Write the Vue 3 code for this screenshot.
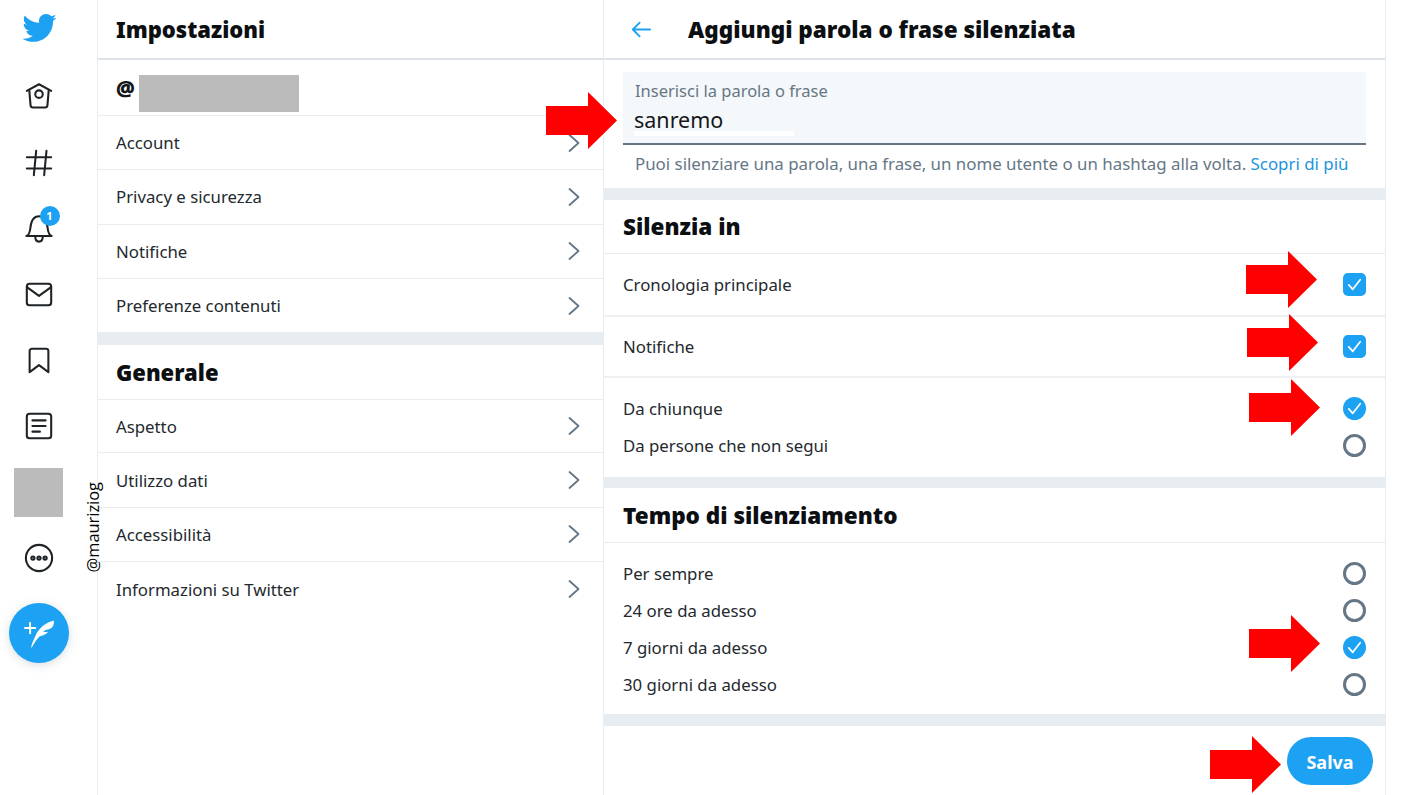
<script setup>
const settingsTop = ['Account', 'Privacy e sicurezza', 'Notifiche', 'Preferenze contenuti']
const settingsGeneral = ['Aspetto', 'Utilizzo dati', 'Accessibilità', 'Informazioni su Twitter']
const muteTimes = [
  { label: 'Per sempre', on: false },
  { label: '24 ore da adesso', on: false },
  { label: '7 giorni da adesso', on: true },
  { label: '30 giorni da adesso', on: false },
]
const arrows = [
  { x: 546, y: 92 },
  { x: 1246, y: 251 },
  { x: 1247, y: 314 },
  { x: 1249, y: 379 },
  { x: 1249, y: 615 },
  { x: 1210, y: 736 },
]
</script>

<template>
  <div class="page">
    <nav class="sidebar">
      <div class="logo">
        <svg viewBox="0 0 24 24" width="36" height="36" fill="#1da1f2"><path d="M23.643 4.937c-.835.37-1.732.62-2.675.727.962-.576 1.7-1.49 2.048-2.578-.9.534-1.897.922-2.958 1.13-.85-.904-2.06-1.47-3.4-1.47-2.572 0-4.658 2.086-4.658 4.66 0 .364.042.718.12 1.06-3.873-.195-7.304-2.05-9.602-4.868-.4.69-.63 1.49-.63 2.342 0 1.616.823 3.043 2.072 3.878-.764-.025-1.482-.234-2.11-.583v.06c0 2.257 1.605 4.14 3.737 4.568-.392.106-.803.162-1.227.162-.3 0-.593-.028-.877-.082.593 1.85 2.313 3.198 4.352 3.234-1.595 1.25-3.604 1.995-5.786 1.995-.376 0-.747-.022-1.112-.065 2.062 1.323 4.51 2.093 7.14 2.093 8.57 0 13.255-7.098 13.255-13.254 0-.2-.005-.402-.014-.602.91-.658 1.7-1.477 2.323-2.41z" /></svg>
      </div>
      <div class="nav-item">
        <svg class="nav-icon" viewBox="0 0 32 32"><path d="M3 10.5 16 3.5l13 7" /><path d="M5.6 9.5 7 26c.1 1.4 1 2.2 2.4 2.2h13.2c1.4 0 2.3-.8 2.4-2.2l1.4-16.5" /><circle cx="16" cy="14" r="4" /></svg>
      </div>
      <div class="nav-item">
        <svg class="nav-icon" viewBox="0 0 32 32"><path d="M13 4l-2.500 26M24 4l-2.500 26M3 11h26M3 23h26" /></svg>
      </div>
      <div class="nav-item bell">
        <svg class="nav-icon" viewBox="0 0 32 32"><path d="M2.500 24.500c3-.8 3.800-4 4.300-8.500C7.500 8.500 10.500 3.500 16 3.500s8.500 5 9.200 12.500c.5 4.500 1.300 7.700 4.300 8.500z" /><path d="M12 25c0 3.500 1.700 5.500 4 5.500s4-2 4-5.500" /></svg>
        <span class="badge">1</span>
      </div>
      <div class="nav-item">
        <svg class="nav-icon" viewBox="0 0 32 32"><rect x="3" y="5" width="26" height="23" rx="3" /><path d="m3.500 9 12.500 9 12.500-9" /></svg>
      </div>
      <div class="nav-item">
        <svg class="nav-icon" viewBox="0 0 32 32"><path d="M6 6.500C6 5 7 4 8.500 4h15C25 4 26 5 26 6.500V29l-10-7.500L6 29z" /></svg>
      </div>
      <div class="nav-item">
        <svg class="nav-icon" viewBox="0 0 32 32"><rect x="3" y="3" width="26" height="26" rx="3" /><path d="M9 10h14M9 16h14M9 22h8" /></svg>
      </div>
      <div class="nav-item">
        <div class="avatar"></div>
      </div>
      <div class="nav-item">
        <svg class="nav-icon" viewBox="0 0 32 32"><circle cx="16" cy="16" r="14" /><circle cx="9.500" cy="16" r="1.700" /><circle cx="16" cy="16" r="1.700" /><circle cx="22.500" cy="16" r="1.700" /></svg>
      </div>
      <button class="fab">
        <svg viewBox="0 0 24 24" width="30" height="30" fill="#fff"><path d="M8.800 7.200H5.600V3.900c0-.4-.3-.8-.8-.8s-.7.4-.7.8v3.300H.8c-.4 0-.8.3-.8.8s.3.8.8.8h3.300v3.300c0 .4.3.8.8.8s.8-.3.8-.8V8.700H9c.4 0 .8-.3.8-.8s-.5-.7-1-.7zm15-4.900v-.1h-.1c-.1 0-9.200 1.200-14.400 11.700-3.800 7.600-3.600 9.900-3.300 9.900.3.100 3.400-6.500 6.700-9.200 5.200-1.100 6.600-3.600 6.600-3.600s-1.500.2-2.100.2c-.8 0-1.400-.2-1.700-.3 1.300-1.200 2.400-1.500 3.500-1.700.9-.2 1.800-.4 3-1.200 2.200-1.600 1.900-5.500 1.900-5.700z" /></svg>
      </button>
    </nav>

    <section class="settings">
      <header class="col-header">
        <h2>Impostazioni</h2>
      </header>
      <div class="account-row">
        <span class="at">@</span>
        <span class="redacted"></span>
      </div>
      <a v-for="item in settingsTop" :key="item" class="menu-row">
        <span>{{ item }}</span>
        <svg class="chevron" viewBox="0 0 12 20"><path d="m1.500 2 9 8-9 8" /></svg>
      </a>
      <div class="band"></div>
      <h2 class="group-title">Generale</h2>
      <a v-for="item in settingsGeneral" :key="item" class="menu-row">
        <span>{{ item }}</span>
        <svg class="chevron" viewBox="0 0 12 20"><path d="m1.500 2 9 8-9 8" /></svg>
      </a>
    </section>

    <main class="detail">
      <header class="col-header detail-header">
        <svg class="back" viewBox="0 0 22 18"><path d="M21 9H2M9.500 1.500 2 9l7.500 7.500" /></svg>
        <h2>Aggiungi parola o frase silenziata</h2>
      </header>

      <div class="input-wrap">
        <div class="input-box">
          <label>Inserisci la parola o frase</label>
          <div class="input-value">sanremo</div>
          <span class="white-strip"></span>
        </div>
        <p class="help">
          Puoi silenziare una parola, una frase, un nome utente o un hashtag alla volta.
          <a>Scopri di più</a>
        </p>
      </div>

      <div class="band"></div>
      <h2 class="section-title">Silenzia in</h2>
      <div class="option-row single first">
        <span>Cronologia principale</span>
        <span class="checkbox">
          <svg viewBox="0 0 24 24"><path d="m5.500 12.500 4.500 5L18.500 6.500" /></svg>
        </span>
      </div>
      <div class="option-row single second">
        <span>Notifiche</span>
        <span class="checkbox">
          <svg viewBox="0 0 24 24"><path d="m5.500 12.500 4.500 5L18.500 6.500" /></svg>
        </span>
      </div>
      <div class="option-group from">
        <div class="option-row">
          <span>Da chiunque</span>
          <span class="radio on">
            <svg viewBox="0 0 24 24"><path d="m5.500 12.500 4.500 5L18.500 6.500" /></svg>
          </span>
        </div>
        <div class="option-row">
          <span>Da persone che non segui</span>
          <span class="radio"></span>
        </div>
      </div>

      <div class="band short"></div>
      <h2 class="section-title tall">Tempo di silenziamento</h2>
      <div class="option-group times">
        <div v-for="t in muteTimes" :key="t.label" class="option-row">
          <span>{{ t.label }}</span>
          <span class="radio" :class="{ on: t.on }">
            <svg v-if="t.on" viewBox="0 0 24 24"><path d="m5.500 12.500 4.500 5L18.500 6.500" /></svg>
          </span>
        </div>
      </div>

      <div class="band"></div>
      <footer class="detail-footer">
        <button class="save">Salva</button>
      </footer>
    </main>

    <span class="watermark">@mauriziog</span>
    <svg
      v-for="(a, i) in arrows"
      :key="i"
      class="red-arrow"
      :style="{ left: a.x + 'px', top: a.y + 'px' }"
      viewBox="0 0 71 57"
    >
      <polygon points="0,14 42,14 42,0 71,28.500 42,57 42,43 0,43" />
    </svg>
  </div>
</template>

<style scoped>
.page {
  position: relative;
  display: flex;
  width: 1411px;
  height: 795px;
  overflow: hidden;
  background: #fff;
  font-family: "Noto Sans", "Open Sans", sans-serif;
  font-size: 16.800px;
  color: #14171a;
}

.sidebar {
  display: flex;
  flex-direction: column;
  align-items: center;
  flex: none;
  width: 77px;
  padding-right: 20px;
  box-sizing: content-box;
}

.logo {
  display: flex;
  justify-content: center;
  height: 63px;
  padding-top: 10px;
  box-sizing: border-box;
}

.nav-item {
  position: relative;
  display: flex;
  align-items: center;
  justify-content: center;
  height: 66px;
  flex: none;
}

.nav-icon {
  width: 30px;
  height: 30px;
  overflow: visible;
  fill: none;
  stroke: #1f2326;
  stroke-width: 2.2;
  stroke-linecap: round;
  stroke-linejoin: round;
}

.badge {
  position: absolute;
  left: 16px;
  top: 11px;
  width: 20px;
  height: 20px;
  border-radius: 50%;
  background: #1da1f2;
  color: #fff;
  font-size: 11px;
  font-weight: 700;
  line-height: 20px;
  text-align: center;
}

.avatar {
  width: 49px;
  height: 49px;
  background: #bbb;
}

.fab {
  display: flex;
  align-items: center;
  justify-content: center;
  flex: none;
  width: 60px;
  height: 60px;
  margin-top: 12px;
  border: 0;
  border-radius: 50%;
  background: #1da1f2;
  box-shadow: 0 2px 10px rgba(101, 119, 134, 0.25);
}

.settings {
  flex: none;
  width: 507px;
  border-left: 1px solid #e6ecf0;
  border-right: 1px solid #e6ecf0;
  box-sizing: border-box;
}

.col-header {
  display: flex;
  align-items: center;
  height: 60px;
  padding-left: 18px;
  border-bottom: 2px solid #dde3e8;
  box-sizing: border-box;
}

h2 {
  margin: 0;
  font-size: 22px;
  font-weight: 900;
  color: #0c0f12;
}

.account-row {
  display: flex;
  align-items: flex-start;
  height: 56px;
  padding: 15px 0 0 18px;
  border-bottom: 1px solid #e6ecf0;
  box-sizing: border-box;
}

.at {
  font-size: 21px;
  line-height: 26px;
  font-weight: 900;
  width: 23px;
}

.redacted {
  width: 160px;
  height: 37px;
  background: #bbb;
}

.menu-row {
  display: flex;
  align-items: center;
  justify-content: space-between;
  height: 54.300px;
  padding: 0 23px 0 18px;
  border-bottom: 1px solid #e6ecf0;
  box-sizing: border-box;
  color: #24292e;
}

.menu-row:last-child {
  border-bottom: 0;
}

.band + .group-title + .menu-row {
  border-top: 1px solid #e6ecf0;
}

.chevron {
  width: 12px;
  height: 20px;
  fill: none;
  stroke: #657786;
  stroke-width: 1.800;
  stroke-linecap: round;
  stroke-linejoin: round;
}

.band {
  height: 12px;
  background: #e6ecf0;
}

.band.short {
  height: 11px;
}

.group-title {
  display: flex;
  align-items: center;
  height: 54px;
  padding-left: 18px;
  box-sizing: border-box;
}

.detail {
  flex: none;
  width: 782px;
  border-right: 1px solid #e6ecf0;
  box-sizing: border-box;
}

.detail h2 {
  font-size: 22.500px;
}

.detail-header {
  padding-left: 27px;
}

.back {
  width: 20px;
  height: 17px;
  margin-right: 37px;
  fill: none;
  stroke: #1da1f2;
  stroke-width: 2;
  stroke-linecap: round;
  stroke-linejoin: round;
  flex: none;
}

.input-wrap {
  padding: 12px 19px 0 19px;
  height: 128px;
  box-sizing: border-box;
}

.input-box {
  position: relative;
  height: 73px;
  padding: 8px 12px 0;
  background: #f5f8fa;
  border-bottom: 2px solid #657786;
  box-sizing: border-box;
}

.input-box label {
  display: block;
  font-size: 16.500px;
  line-height: 22px;
  color: #657786;
}

.input-value {
  margin: 3px 0 0 -1px;
  font-size: 21.500px;
  line-height: 30px;
  color: #14171a;
}

.white-strip {
  position: absolute;
  left: 11px;
  top: 59px;
  width: 160px;
  height: 5px;
  background: #fff;
}

.help {
  margin: 7px 0 0 12px;
  font-size: 16.880px;
  line-height: 24px;
  color: #657786;
  white-space: nowrap;
}

.help a {
  color: #1b95e0;
}

.section-title {
  display: flex;
  align-items: center;
  height: 54px;
  padding-left: 19px;
  border-bottom: 1px solid #e6ecf0;
  box-sizing: border-box;
}

.section-title.tall {
  height: 55px;
}

.option-row {
  display: flex;
  align-items: center;
  justify-content: space-between;
  height: 37px;
  padding: 0 19px;
  color: #24292e;
}

.option-row.single {
  border-bottom: 2px solid #eef1f4;
  box-sizing: border-box;
}

.option-row.first {
  height: 63px;
}

.option-row.second {
  height: 61px;
}

.option-group.from {
  height: 99px;
  padding-top: 12px;
  box-sizing: border-box;
}

.option-group.times {
  height: 171px;
  padding-top: 12px;
  box-sizing: border-box;
}

.checkbox,
.radio {
  display: flex;
  align-items: center;
  justify-content: center;
  flex: none;
  width: 23px;
  height: 23px;
  box-sizing: border-box;
}

.checkbox {
  border-radius: 5px;
  background: #1da1f2;
}

.radio {
  border: 3px solid #657786;
  border-radius: 50%;
}

.radio.on {
  border: 0;
  background: #1da1f2;
}

.checkbox svg,
.radio svg {
  width: 21px;
  height: 21px;
  fill: none;
  stroke: #fff;
  stroke-width: 2;
  stroke-linecap: round;
  stroke-linejoin: round;
}

.detail-footer {
  display: flex;
  justify-content: flex-end;
  padding: 11px 12px 0 0;
}

.save {
  width: 86px;
  height: 48px;
  padding: 2px 0 0;
  border: 0;
  border-radius: 24px;
  background: #1da1f2;
  color: #fff;
  font-family: inherit;
  font-size: 18px;
  font-weight: 700;
}

.watermark {
  position: absolute;
  left: 83px;
  bottom: 223px;
  writing-mode: vertical-rl;
  transform: rotate(180deg);
  font-family: "Open Sans", sans-serif;
  font-size: 16.400px;
  line-height: 19px;
  color: #000;
}

.red-arrow {
  position: absolute;
  width: 71px;
  height: 57px;
  fill: #ff0000;
}
</style>
